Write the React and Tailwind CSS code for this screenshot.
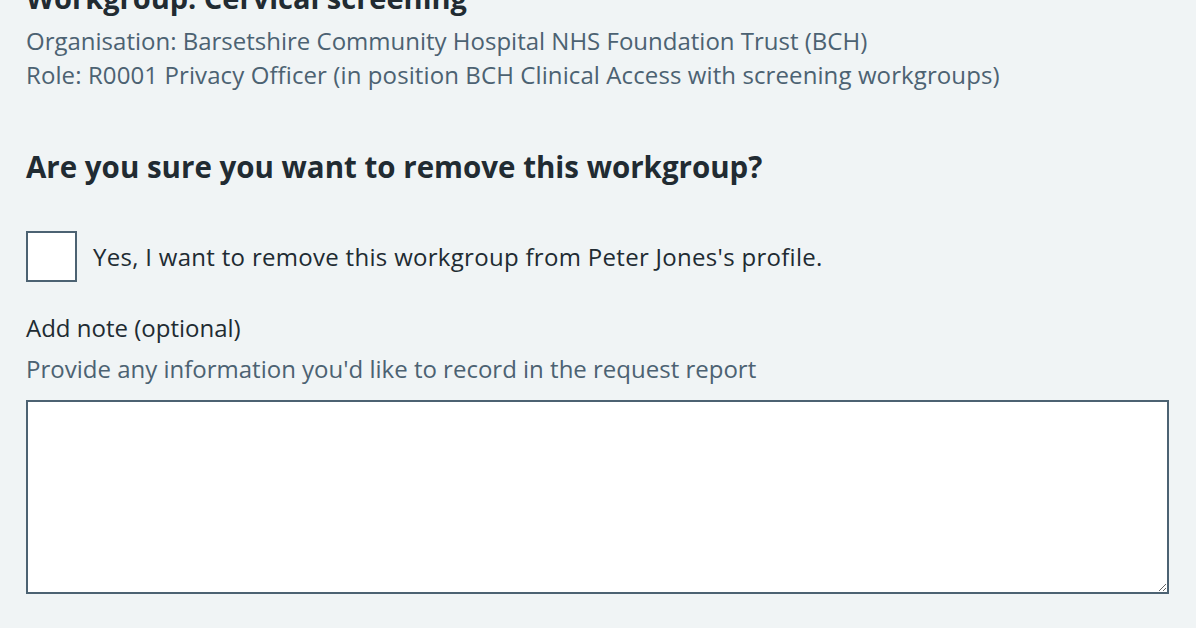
export default function App() {
  return (
    <div className="min-h-[628px] w-full overflow-hidden bg-[#f0f4f5] font-['Open_Sans',sans-serif] text-[#212b32]">
      <div className="pl-[26px] pr-[27px]">
        <h2 className="mt-[-24px] text-[29px] font-bold leading-[44px]">Workgroup: Cervical screening</h2>
        <p className="mt-[4px] text-[24px] leading-[34px] text-[#4c6272]">
          Organisation: Barsetshire Community Hospital NHS Foundation Trust (BCH)
        </p>
        <p className="text-[24px] leading-[34px] tracking-[0.1px] text-[#4c6272]">
          Role: R0001 Privacy Officer (in position BCH Clinical Access with screening workgroups)
        </p>

        <h3 className="mt-[55px] text-[29.5px] font-bold leading-[40px]">Are you sure you want to remove this workgroup?</h3>

        <label className="mt-[44px] flex items-center gap-[16px]">
          <span className="block h-[51px] w-[51px] shrink-0 border-2 border-[#4c6272] bg-white" />
          <span className="text-[24px] leading-[28px] tracking-[0.3px]">Yes, I want to remove this workgroup from Peter Jones's profile.</span>
        </label>

        <div className="mt-[28px]">
          <label className="block text-[24px] leading-[36px]">Add note (optional)</label>
          <p className="mt-[5px] text-[24px] leading-[36px] text-[#4c6272]">
            Provide any information you'd like to record in the request report
          </p>
          <textarea className="mt-[13px] block h-[194px] w-full border-2 border-[#4c6272] bg-white" />
        </div>
      </div>
    </div>
  );
}
